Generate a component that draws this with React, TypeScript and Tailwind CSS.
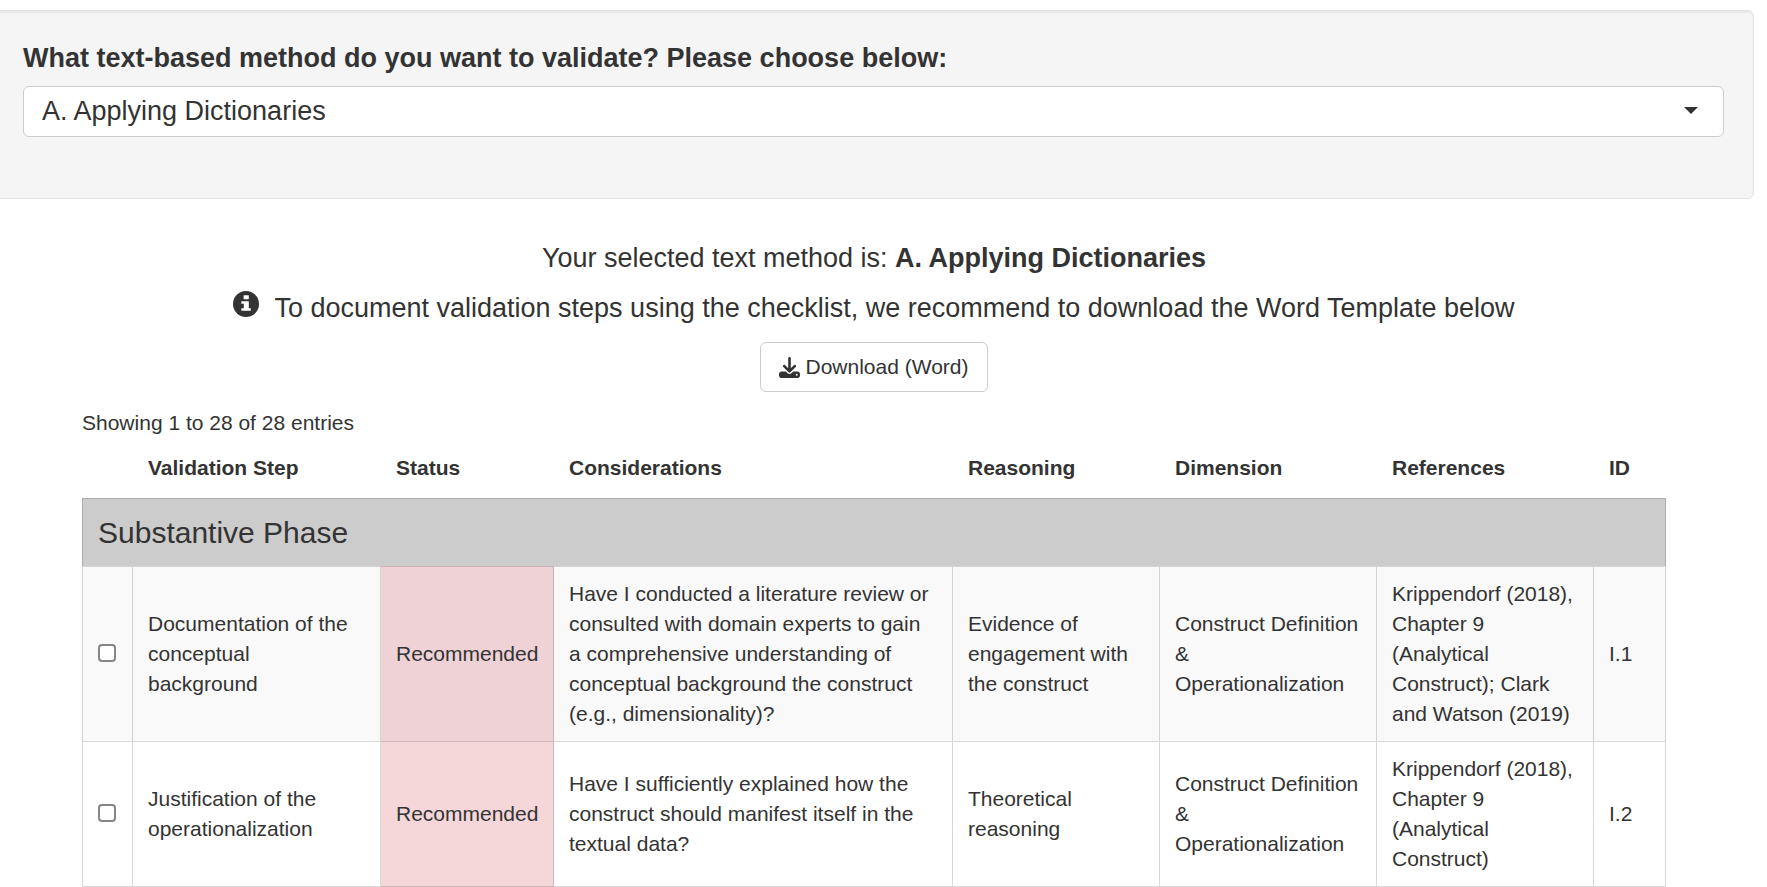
import { FaDownload } from "react-icons/fa6";

type Step = {
  id: string;
  step: string;
  status: string;
  considerations: string;
  reasoning: string;
  dimension: string;
  references: string;
};

const steps: Step[] = [
  {
    id: "I.1",
    step: "Documentation of the conceptual background",
    status: "Recommended",
    considerations:
      "Have I conducted a literature review or consulted with domain experts to gain a comprehensive understanding of conceptual background the construct (e.g., dimensionality)?",
    reasoning: "Evidence of engagement with the construct",
    dimension: "Construct Definition & Operationalization",
    references:
      "Krippendorf (2018), Chapter 9 (Analytical Construct); Clark and Watson (2019)",
  },
  {
    id: "I.2",
    step: "Justification of the operationalization",
    status: "Recommended",
    considerations:
      "Have I sufficiently explained how the construct should manifest itself in the textual data?",
    reasoning: "Theoretical reasoning",
    dimension: "Construct Definition & Operationalization",
    references: "Krippendorf (2018), Chapter 9 (Analytical Construct)",
  },
];

const methods = ["A. Applying Dictionaries"];

const th = "px-[15px] py-[15px] text-left font-bold";
const td = "border-t border-r border-black/15 px-[15px] py-3 align-middle";

function InfoIcon() {
  return (
    <svg viewBox="0 0 26 26" aria-hidden="true" className="mr-[15px] size-[26px] -translate-y-[2px]">
      <circle cx="13" cy="13" r="13" fill="currentColor" />
      <path
        fill="#fff"
        d="M11 4.2h4.4q.4 0 .4.4v3.2q0 .4-.4.4H11q-.4 0-.4-.4V4.600q0-.4.4-.4zM8.700 10.200h6.700q.4 0 .4.4v6.600h1.600q.4 0 .4.4v1.800q0 .4-.4.4H8.700q-.4 0-.4-.4v-1.800q0-.4.4-.4h2.100v-4.400H8.700q-.4 0-.4-.4v-1.800q0-.4.4-.4z"
      />
    </svg>
  );
}

function MethodPicker() {
  return (
    <section className="mt-[10px] -ml-[6px] rounded-md border border-[#e3e3e3] bg-[#f5f5f5] pt-[28px] pr-[29px] pb-[61px] pl-[28px] shadow-[inset_0_2px_2px_rgba(0,0,0,0.05)]">
      <label htmlFor="method" className="block text-[27px] leading-[38px] font-bold">
        What text-based method do you want to validate? Please choose below:
      </label>
      <div className="relative mt-[9px]">
        <select
          id="method"
          className="block h-[51px] w-full appearance-none rounded-md border border-[#ccc] bg-white pr-12 pb-[2px] pl-[18px] text-[27px]"
        >
          {methods.map((m) => (
            <option key={m}>{m}</option>
          ))}
        </select>
        <span className="pointer-events-none absolute top-[21px] right-[26px] border-x-[7px] border-t-[7px] border-x-transparent border-t-[#333]" />
      </div>
    </section>
  );
}

function Checklist() {
  return (
    <table className="w-full table-fixed border-separate border-spacing-0">
      <colgroup>
        <col className="w-[51px]" />
        <col className="w-[248px]" />
        <col className="w-[173px]" />
        <col />
        <col className="w-[207px]" />
        <col className="w-[217px]" />
        <col className="w-[217px]" />
        <col className="w-[72px]" />
      </colgroup>
      <thead>
        <tr>
          <td />
          <th className={th}>Validation Step</th>
          <th className={th}>Status</th>
          <th className={th}>Considerations</th>
          <th className={th}>Reasoning</th>
          <th className={th}>Dimension</th>
          <th className={th}>References</th>
          <th className={th}>ID</th>
        </tr>
      </thead>
      <tbody>
        <tr>
          <th
            colSpan={8}
            scope="rowgroup"
            className="border-x border-t border-black/15 bg-[#ccc] px-[15px] py-3 text-left text-[30px] leading-[43px] font-normal"
          >
            Substantive Phase
          </th>
        </tr>
      </tbody>
      <tbody className="[&>tr:last-child>td]:border-b">
        {steps.map((s, i) => (
          <tr key={s.id} className={i % 2 === 0 ? "bg-[#f9f9f9]" : "bg-white"}>
            <td className={`${td} border-l`}>
              <input
                type="checkbox"
                aria-label={s.step}
                className="mb-[2px] block size-[18px] appearance-none rounded-[4px] border-2 border-[#858585] bg-white checked:bg-[#0075ff]"
              />
            </td>
            <td className={td}>{s.step}</td>
            <td className={`${td} ${i % 2 === 0 ? "bg-[#eed2d6]" : "bg-[#f5d7d9]"}`}>{s.status}</td>
            <td className={td}>{s.considerations}</td>
            <td className={td}>{s.reasoning}</td>
            <td className={td}>{s.dimension}</td>
            <td className={td}>{s.references}</td>
            <td className={td}>{s.id}</td>
          </tr>
        ))}
      </tbody>
    </table>
  );
}

export default function App() {
  return (
    <div className="flow-root overflow-x-hidden bg-white pr-[13px] font-['Liberation_Sans',Arial,sans-serif] text-[21px] leading-[30px] text-[#333]">
      <MethodPicker />
      <main className="pt-11 pr-[88px] pl-[82px]">
        <div className="flex flex-col items-center text-center">
          <h4 className="text-[27px] leading-[30px]">
            Your selected text method is: <b>A. Applying Dictionaries</b>
          </h4>
          <h4 className="mt-5 flex text-[27px] leading-[30px]">
            <InfoIcon />
            To document validation steps using the checklist, we recommend to download the Word
            Template below
          </h4>
          <button
            type="button"
            className="mt-[19px] flex h-[50px] items-center gap-[5px] rounded-md border border-[#ccc] bg-white px-[18px]"
          >
            <FaDownload className="size-[21px]" />
            Download (Word)
          </button>
        </div>
        <p className="mt-4">Showing 1 to 28 of 28 entries</p>
        <Checklist />
      </main>
    </div>
  );
}
